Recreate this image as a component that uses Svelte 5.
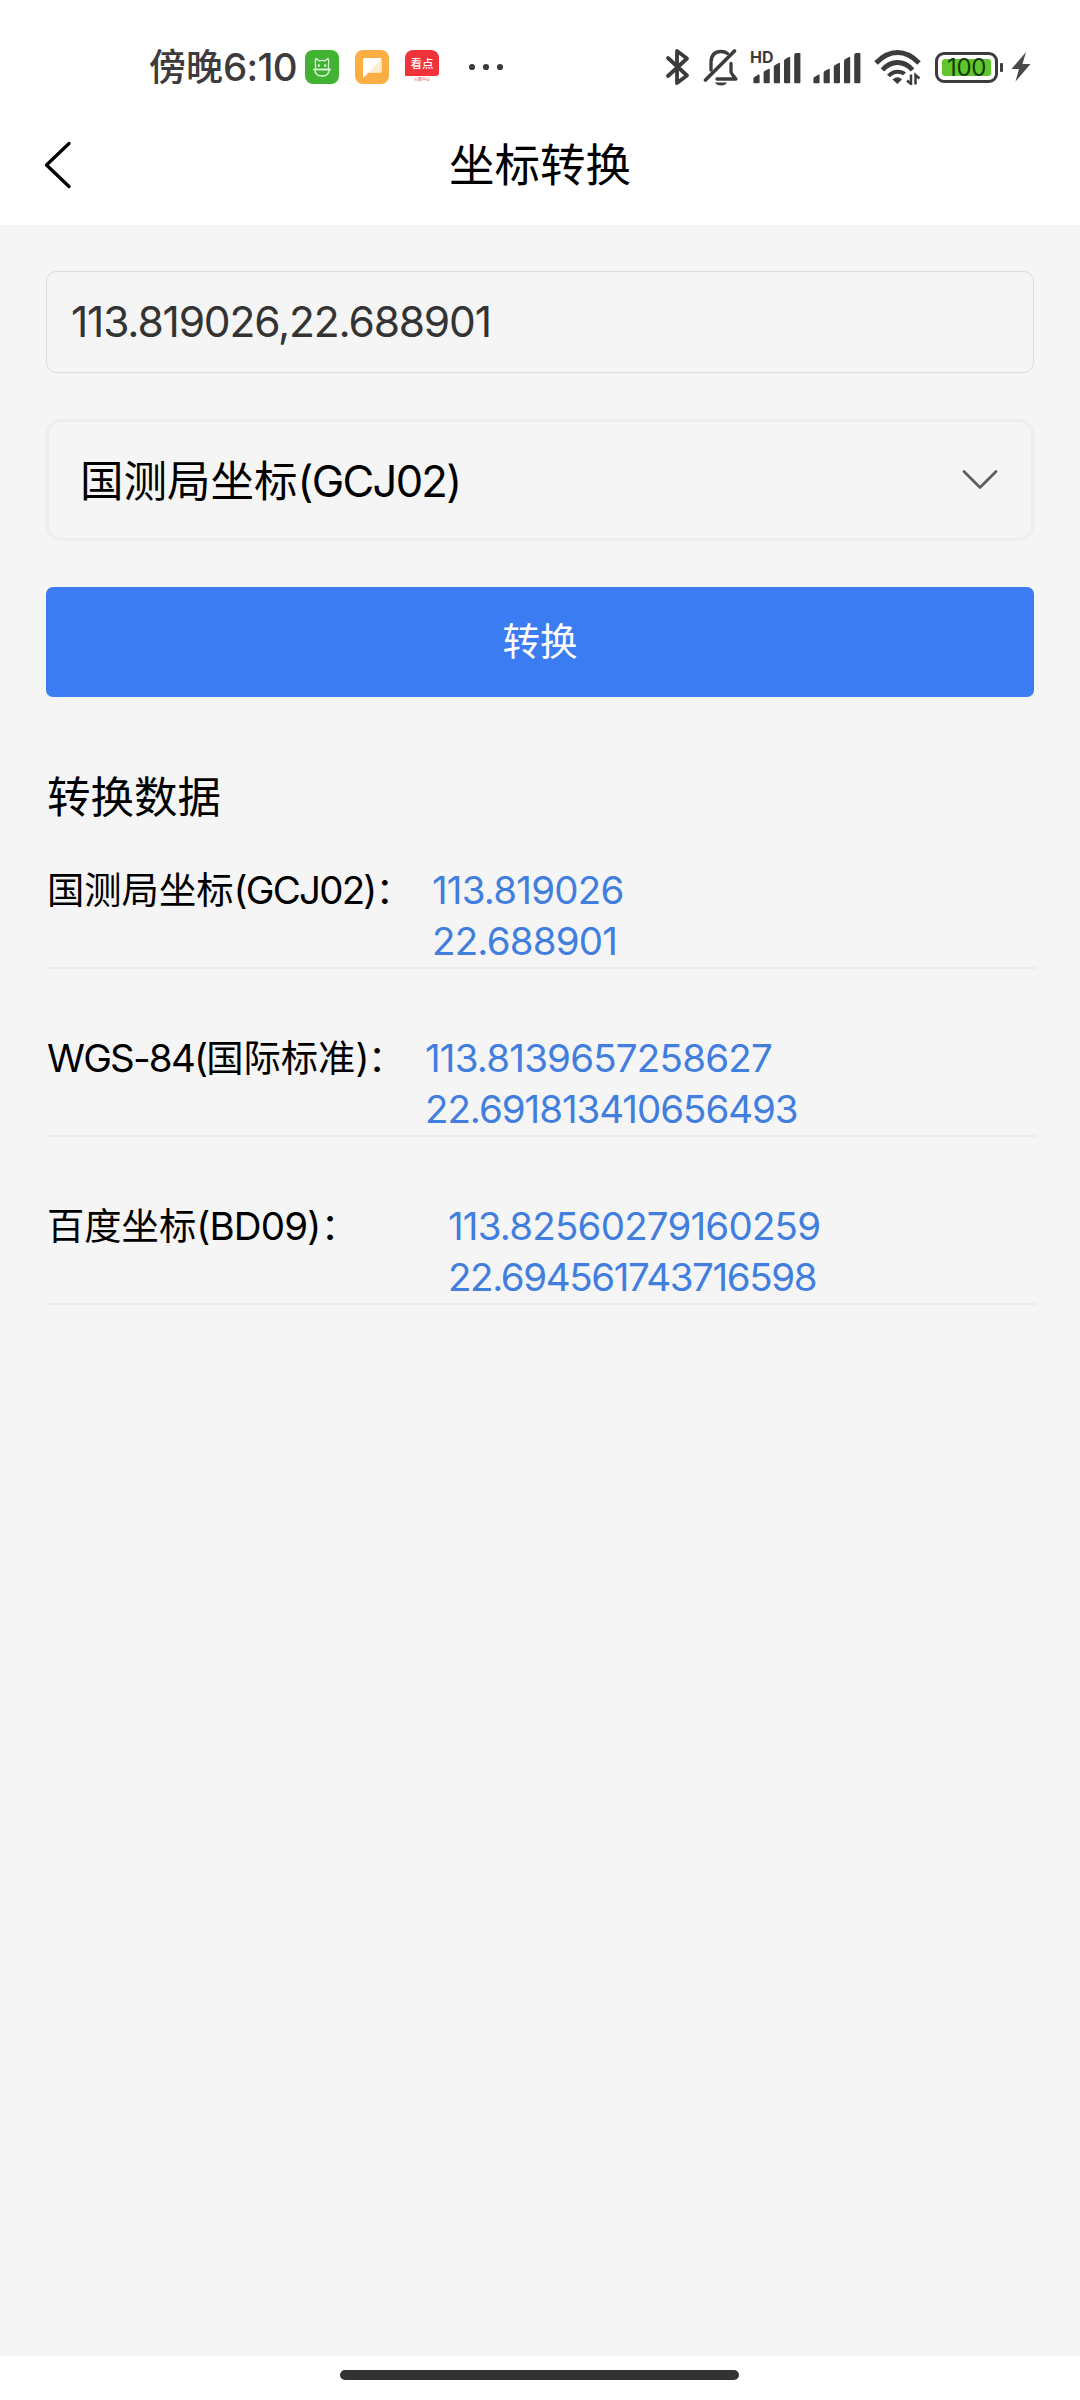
<script>
  const bars = [0, 1, 2, 3, 4];
  const rows = [
    { id: 'gcj', parts: [['国测局坐标', 'cn'], ['(GCJ02)', 'en'], ['：', 'cn']], lng: '113.819026', lat: '22.688901' },
    { id: 'wgs', parts: [['WGS-84(', 'en'], ['国际标准', 'cn'], [')', 'en'], ['：', 'cn']], lng: '113.8139657258627', lat: '22.691813410656493' },
    { id: 'bd', parts: [['百度坐标', 'cn'], ['(BD09)', 'en'], ['：', 'cn']], lng: '113.82560279160259', lat: '22.694561743716598' }
  ];
</script>

{#snippet signal()}
  <svg class="signal" width="48" height="31" viewBox="0 0 48 31">
    {#each bars as i}
      <path d="M{i * 10.2 + 0.4} {25.6 - i * 5.9}q0-1 1-1.6l3.8-2.2q1.4-.6 1.4 .8V29.2q0 1-1 1H{i * 10.2 + 1.4}q-1 0-1-1Z" fill="#3d3b3c" />
    {/each}
  </svg>
{/snippet}

<div class="screen" lang="zh-CN">
  <div class="status">
    <div class="clock"><span>傍晚</span><span class="time">6:10</span></div>
    <svg class="app" width="34" height="34" viewBox="0 0 34 34">
      <rect width="34" height="34" rx="8" fill="#42b233" />
      <g fill="none" stroke="#dff5da" stroke-width="1.3" stroke-linejoin="round" stroke-linecap="round">
        <path d="M10.500 18v-4q-.8-3 .5-5.500l3 2.300q3-.8 6 0l3-2.300q1.300 2.500 .5 5.500v4M9.800 19.500q.3 6.500 7.200 6.500t7.200-6.500Z" />
        <path d="M8.500 19.500h17" />
      </g>
      <path d="M12.800 14.500h2v2h-2zM19.200 14.500h2v2h-2z" fill="#fff" />
    </svg>
    <svg class="app" width="34" height="34" viewBox="0 0 34 34">
      <rect width="34" height="34" rx="8" fill="#fbae43" />
      <path d="M9 8h16q1.500 0 1.500 1.500V21q0 1.500-1.500 1.500H14L8 28V9.500Q8 8 9 8Z" fill="#fff" />
      <path d="M26.500 9 14 22.500h11q1.500 0 1.500-1.500Z" fill="#fdebcf" />
    </svg>
    <div class="app news">
      <div class="news-top">看点</div>
      <div class="news-sub">火箭中心</div>
    </div>
    <svg class="more" width="36" height="8" viewBox="0 0 36 8" fill="#3d3b3c">
      <circle cx="4" cy="4" r="3.100" /><circle cx="18" cy="4" r="3.100" /><circle cx="32" cy="4" r="3.100" />
    </svg>
    <div class="spacer"></div>
    <svg class="bt" width="26" height="40" viewBox="0 0 26 40" fill="none" stroke="#3d3b3c" stroke-width="3.800" stroke-linejoin="round" stroke-linecap="round">
      <path d="M3 11 22 28.500 12 36V4l10 7.500L3 29" />
    </svg>
    <svg class="bell" width="36" height="40" viewBox="0 0 36 40" fill="none" stroke="#3d3b3c" stroke-width="3.300" stroke-linecap="round" stroke-linejoin="round">
      <path d="M2.500 33 31.500 4" stroke-width="3.600" />
      <path d="M8 23V15Q8.500 4.500 18 4.500q4 0 6.500 2M28 16.500v8q0 2 5 7.500H14" />
      <path d="M12 35.500h12q-1.500 3-6 3t-6-3Z" fill="#3d3b3c" stroke="none" />
    </svg>
    <div class="hd-signal"><span class="hd">HD</span>{@render signal()}</div>
    {@render signal()}
    <svg class="wifi" width="47" height="36" viewBox="0 0 47 36" fill="none" stroke="#3d3b3c" stroke-width="4.800">
      <path d="M2 14Q12 3.500 23.500 3.500T45 14" />
      <path d="M8.500 21Q15 13.500 23.500 13.500T38.500 21" />
      <path d="M14.500 27Q18.500 22.700 23.500 22.700t7 2.300" stroke-width="4" />
      <path d="M18.500 30.500q5-4.500 9.500 0l-4.700 4.500Z" fill="#3d3b3c" stroke="none" />
      <path d="M37 25.500v9.500l-4-3.500M41.500 35.500V26l4 3.500" stroke-width="2.500" />
    </svg>
    <div class="battery"><div class="charge">100</div></div>
    <div class="nub"></div>
    <svg class="bolt" width="20" height="30" viewBox="0 0 20 30"><path d="M15 0 .5 17H8L4.500 29.500 19.500 12H11.500Z" fill="#4b494a" /></svg>
  </div>

  <header>
    <svg class="back" width="30" height="50" viewBox="0 0 30 50" fill="none" stroke="#000" stroke-width="3.300" stroke-linecap="round" stroke-linejoin="round">
      <path d="M26 3.500 3.500 25 26 46.500" />
    </svg>
    <h1>坐标转换</h1>
  </header>

  <main>
    <div class="input">113.819026,22.688901</div>
    <div class="select">
      <div class="choice"><span>国测局坐标</span><span class="code">(GCJ02)</span></div>
      <svg width="36" height="22" viewBox="0 0 36 22" fill="none" stroke="#606060" stroke-width="2.800" stroke-linecap="round" stroke-linejoin="round">
        <path d="M2 2.500 18 18.500 34 2.500" />
      </svg>
    </div>
    <div class="button">转换</div>
    <h2>转换数据</h2>
    {#each rows as row}
      <div class="row {row.id}">
        <div class="label">{#each row.parts as [text, kind]}<span class={kind}>{text}</span>{/each}</div>
        <div class="value"><div>{row.lng}</div><div class="lat">{row.lat}</div></div>
      </div>
    {/each}
  </main>

  <footer><div class="pill"></div></footer>
</div>

<style>
  :global(body) { margin: 0; background: #fff; }
  * { box-sizing: border-box; }
  .screen {
    width: 1080px;
    height: 2400px;
    display: flex;
    flex-direction: column;
    background: #fff;
    color: #000;
    font-family: Inter, "Noto Sans CJK SC", sans-serif;
    overflow: hidden;
  }
  svg { display: block; flex: none; }
  .status {
    height: 110px;
    padding: 24px 49px 0 149px;
    display: flex;
    align-items: center;
    color: #3d3b3c;
  }
  .clock {
    width: 156px;
    display: flex;
    align-items: baseline;
    font-size: 37px;
    font-weight: 500;
    line-height: 50px;
    white-space: nowrap;
  }
  .time { font-size: 38.500px; letter-spacing: -0.700px; }
  .app { margin-right: 16px; flex: none; }
  .news { width: 34px; height: 34px; display: flex; flex-direction: column; }
  .news-top {
    height: 26px;
    border-radius: 8px 8px 3px 1px;
    background: #f0323a;
    color: #fff;
    font-size: 11.500px;
    font-weight: 500;
    line-height: 29px;
    text-align: center;
  }
  .news-sub { font-size: 4px; line-height: 7px; color: #c33; text-align: center; }
  .more { margin-left: 13px; }
  .spacer { flex: 1; }
  .bt { margin-right: 12px; }
  .bell { margin-right: 14px; }
  .hd-signal { position: relative; margin-right: 12px; }
  .hd {
    position: absolute;
    left: -3px;
    top: -3px;
    font-size: 16px;
    font-weight: 700;
    line-height: 16px;
  }
  .signal { position: relative; top: 1px; }
  .wifi { margin-left: 13px; }
  .battery {
    width: 63px;
    height: 31px;
    margin-left: 14px;
    padding: 4px;
    border: 3px solid #3d3b3c;
    border-radius: 9px;
    flex: none;
  }
  .charge {
    height: 17px;
    border-radius: 3px;
    background: #5fc72b;
    color: #173b08;
    font-size: 24px;
    font-weight: 400;
    line-height: 17px;
    text-align: center;
    letter-spacing: -0.300px;
  }
  .nub { width: 3px; height: 9px; margin: 0 8px 0 2px; border-radius: 1px; background: #3d3b3c; }
  header {
    height: 115px;
    display: grid;
    grid-template-columns: 100px 1fr 100px;
    align-items: center;
    padding-bottom: 6px;
  }
  .back { margin-left: 43px; }
  h1, h2 { margin: 0; font-weight: 400; }
  h1 { padding-top: 2px; text-align: center; font-size: 45.500px; line-height: 60px; }
  main {
    flex: 1;
    padding: 46px 46px 0;
    background: #f5f5f5;
  }
  .input {
    height: 102px;
    padding-left: 24px;
    border: 1.500px solid #dcdcdc;
    border-radius: 10px;
    color: #333;
    font-size: 42.500px;
    line-height: 100px;
    letter-spacing: -1.180px;
  }
  .select {
    height: 122px;
    margin-top: 46px;
    padding: 0 33px 0 31px;
    border: 3px solid #eee;
    border-radius: 15px;
    display: flex;
    align-items: center;
    justify-content: space-between;
    font-size: 43.500px;
  }
  .choice { padding-bottom: 3px; }
  .code { letter-spacing: -1.700px; }
  .button {
    height: 110px;
    margin-top: 46px;
    border-radius: 7px;
    background: #3c7cf3;
    color: #fff;
    font-size: 37.500px;
    line-height: 110px;
    text-align: center;
  }
  h2 { margin: 70px 0 0 1px; font-size: 43.500px; line-height: 60px; }
  .row {
    height: 168px;
    width: 989px;
    margin-left: 1px;
    padding-top: 64px;
    display: flex;
    border-bottom: 2px solid #ebebeb;
    font-size: 38.500px;
    line-height: 51px;
    white-space: nowrap;
  }
  .row.gcj { height: 142px; padding-top: 38px; }
  .label { width: 385px; }
  .wgs .label { width: 378px; }
  .bd .label { width: 401px; }
  .cn { font-size: 37.300px; }
  .en { letter-spacing: -1.800px; }
  .bd .en { letter-spacing: -0.800px; }
  .value { color: #417ede; letter-spacing: -0.800px; }
  .wgs .lat { letter-spacing: -1.050px; }
  .bd .lat { letter-spacing: -1.400px; }
  footer { height: 44px; padding: 14px 1px 0 0; display: flex; justify-content: center; }
  .pill { width: 399px; height: 10px; border-radius: 5px; background: #333; }
</style>
